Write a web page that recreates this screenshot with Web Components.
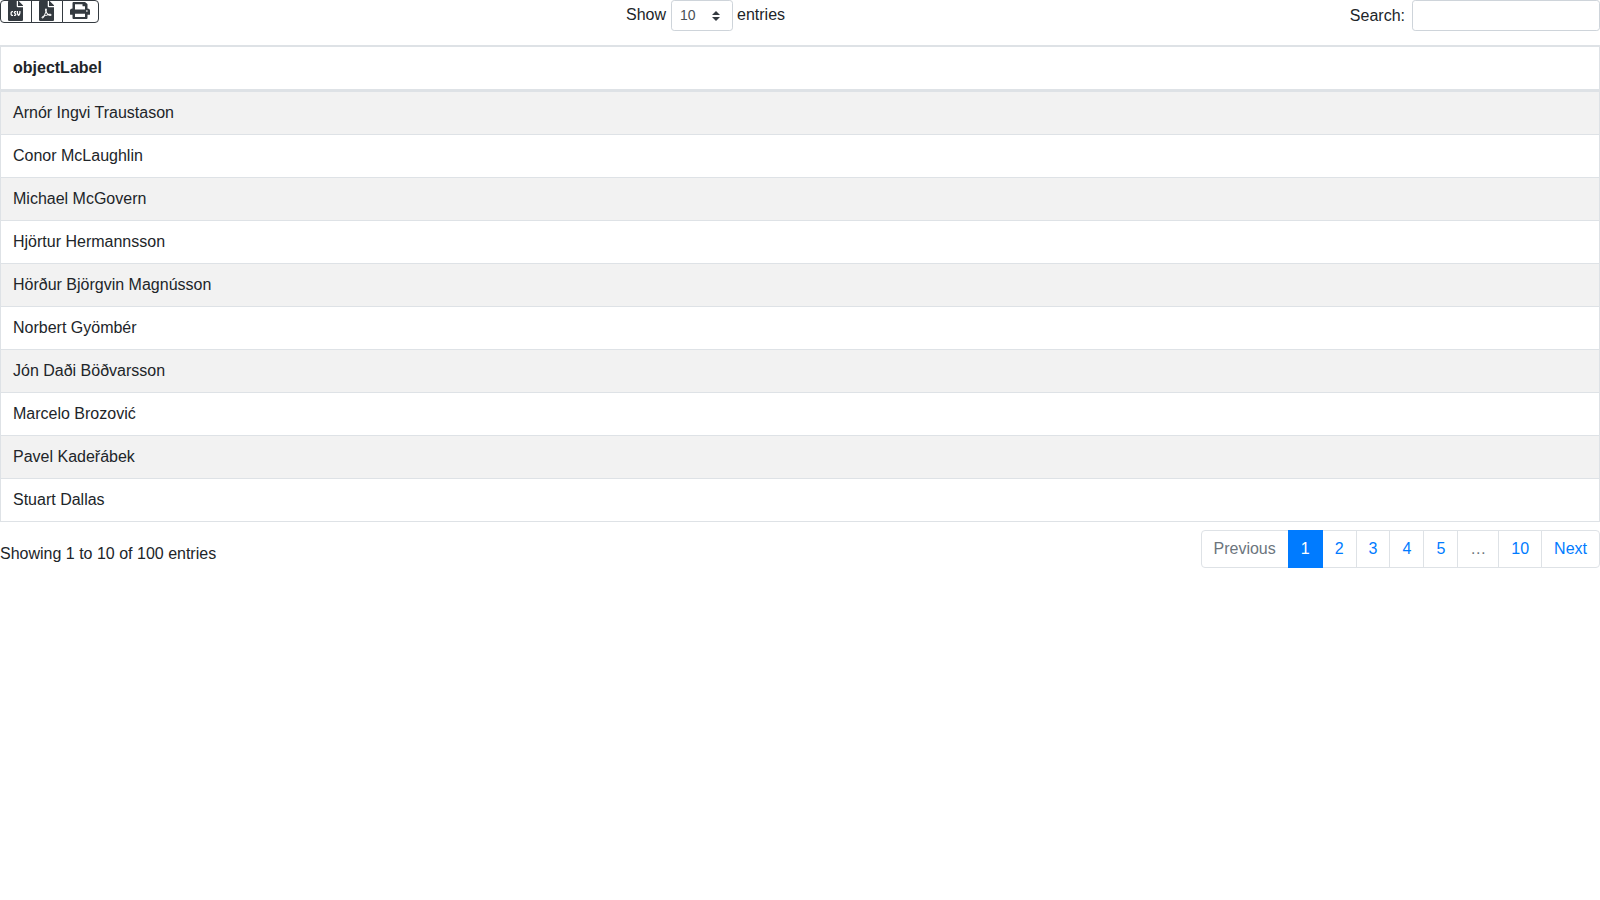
<!DOCTYPE html>
<html lang="en">
<head>
<meta charset="utf-8">
<title>objectLabel</title>
<style>
  html, body { margin: 0; }
  body { font: 16px/24px "Liberation Sans", Arial, sans-serif; color: #212529; }
</style>
</head>
<body>
<dt-toolbar>
  <dt-export slot="left"></dt-export>
  <dt-length slot="middle" value="10"></dt-length>
  <dt-search slot="right"></dt-search>
</dt-toolbar>
<dt-table heading="objectLabel">
  <dt-row>Arnór Ingvi Traustason</dt-row>
  <dt-row>Conor McLaughlin</dt-row>
  <dt-row>Michael McGovern</dt-row>
  <dt-row>Hjörtur Hermannsson</dt-row>
  <dt-row>Hörður Björgvin Magnússon</dt-row>
  <dt-row>Norbert Gyömbér</dt-row>
  <dt-row>Jón Daði Böðvarsson</dt-row>
  <dt-row>Marcelo Brozović</dt-row>
  <dt-row>Pavel Kadeřábek</dt-row>
  <dt-row>Stuart Dallas</dt-row>
</dt-table>
<dt-footer>
  <span slot="info">Showing 1 to 10 of 100 entries</span>
  <dt-pager slot="pager"></dt-pager>
</dt-footer>
<script>
const ICONS = {
  csv: ["0 0 384 512", "M224 136V0H24C10.7 0 0 10.7 0 24v464c0 13.3 10.7 24 24 24h336c13.3 0 24-10.7 24-24V160H248c-13.2 0-24-10.8-24-24zm-96 144c0 4.42-3.58 8-8 8h-8c-8.84 0-16 7.16-16 16v32c0 8.84 7.16 16 16 16h8c4.42 0 8 3.58 8 8v16c0 4.42-3.58 8-8 8h-8c-26.51 0-48-21.49-48-48v-32c0-26.51 21.49-48 48-48h8c4.42 0 8 3.58 8 8v16zm44.27 104H160c-4.42 0-8-3.58-8-8v-16c0-4.42 3.58-8 8-8h12.27c5.95 0 10.41-3.5 10.41-6.62 0-1.3-.75-2.66-2.12-3.84l-21.89-18.77c-8.47-7.22-13.33-17.48-13.33-28.14 0-21.3 19.02-38.62 42.41-38.62H200c4.42 0 8 3.58 8 8v16c0 4.42-3.58 8-8 8h-12.27c-5.95 0-10.41 3.5-10.41 6.62 0 1.3.75 2.66 2.12 3.84l21.89 18.77c8.47 7.22 13.33 17.48 13.33 28.14.01 21.29-19 38.62-42.39 38.62zM256 264v20.8c0 20.27 5.7 40.17 16 56.88 10.3-16.7 16-36.61 16-56.88V264c0-4.42 3.58-8 8-8h16c4.42 0 8 3.58 8 8v20.8c0 35.48-12.88 68.89-36.28 94.09-3.02 3.25-7.27 5.11-11.72 5.11s-8.7-1.86-11.72-5.11c-23.4-25.2-36.28-58.61-36.28-94.09V264c0-4.42 3.58-8 8-8h16c4.42 0 8 3.58 8 8zm121-159L279.1 7c-4.5-4.5-10.6-7-17-7H256v128h128v-6.1c0-6.3-2.5-12.4-7-16.9z"],
  pdf: ["0 0 384 512", "M181.9 256.1c-5-16-4.9-46.9-2-46.9 8.4 0 7.6 36.9 2 46.9zm-1.7 47.2c-7.7 20.2-17.3 43.3-28.4 62.7 18.3-7 39-17.2 62.9-21.9-12.7-9.6-24.9-23.4-34.5-40.8zM86.1 428.1c0 .8 13.2-5.4 34.9-40.2-6.7 6.3-29.1 24.5-34.9 40.2zM248 160h136v328c0 13.3-10.7 24-24 24H24c-13.3 0-24-10.7-24-24V24C0 10.7 10.7 0 24 0h200v136c0 13.2 10.8 24 24 24zm-8 171.8c-20-12.2-33.3-29-42.7-53.8 4.5-18.5 11.6-46.6 6.2-64.2-4.7-29.4-42.4-26.5-47.8-6.8-5 18.3-.4 44.1 8.1 77-11.6 27.6-28.7 64.6-40.8 85.8-.1 0-.1.1-.2.1-27.1 13.9-73.6 44.5-54.5 68 5.6 6.9 16 10 21.5 10 17.9 0 35.7-18 61.1-61.8 25.8-8.5 54.1-19.1 79-23.2 21.7 11.8 47.1 19.5 64 19.5 29.2 0 31.2-32 19.7-43.4-13.9-13.6-54.3-9.7-73.6-7.2zM377 105L279 7c-4.5-4.5-10.6-7-17-7h-6v128h128v-6.1c0-6.3-2.5-12.4-7-16.9zm-74.1 255.3c4.1-2.7-2.5-11.9-42.8-9 37.1 15.8 42.8 9 42.8 9z"],
  print: ["0 0 512 512", "M448 192V77.25c0-8.49-3.37-16.62-9.37-22.63L393.37 9.37c-6-6-14.14-9.37-22.63-9.37H96C78.33 0 64 14.33 64 32v160c-35.35 0-64 28.65-64 64v112c0 8.84 7.16 16 16 16h48v96c0 17.67 14.33 32 32 32h320c17.67 0 32-14.33 32-32v-96h48c8.84 0 16-7.16 16-16V256c0-35.35-28.65-64-64-64zm-64 256H128v-96h256v96zm0-224H128V64h192v48c0 8.84 7.16 16 16 16h48v96zm48 72c-13.25 0-24-10.75-24-24 0-13.26 10.75-24 24-24s24 10.74 24 24c0 13.25-10.75 24-24 24z"]
};

class DtToolbar extends HTMLElement {
  constructor() {
    super();
    this.attachShadow({mode: "open"}).innerHTML = `
      <style>
        :host { display: grid; grid-template-columns: 99px 1fr 288px; height: 45px; }
        .middle { display: flex; justify-content: center; }
        .right { display: flex; justify-content: flex-end; }
      </style>
      <div><slot name="left"></slot></div>
      <div class="middle"><slot name="middle"></slot></div>
      <div class="right"><slot name="right"></slot></div>`;
  }
}

class DtExport extends HTMLElement {
  constructor() {
    super();
    const btn = (k, w, size) => `<button style="width:${w}px" aria-label="${k}"><svg viewBox="${ICONS[k][0]}" ${size} preserveAspectRatio="none"><path fill="currentColor" d="${ICONS[k][1]}"/></svg></button>`;
    this.attachShadow({mode: "open"}).innerHTML = `
      <style>
        :host { display: flex; width: 99px; height: 23px; }
        button { display: flex; align-items: center; justify-content: center; flex: none; height: 23px; padding: 0; margin: 0 0 0 -1px;
          background: #fff; color: #343a40; border: 1px solid #343a40; overflow: hidden; }
        button:first-of-type { margin-left: 0; border-radius: 4px 0 0 4px; }
        button:last-of-type { border-radius: 0 4px 4px 0; }
        svg { display: block; flex: none; margin: -1px 1px 0 0; }
        button:last-of-type svg { margin-top: -2px; }
      </style>
      ${btn("csv", 32, 'width="15" height="20"')}${btn("pdf", 32, 'width="15" height="20"')}${btn("print", 37, 'width="20" height="17"')}`;
  }
}

class DtLength extends HTMLElement {
  constructor() {
    super();
    const v = this.getAttribute("value");
    this.attachShadow({mode: "open"}).innerHTML = `
      <style>
        :host { display: flex; height: 31px; align-items: flex-start; white-space: nowrap; line-height: 30px; }
        .select { box-sizing: border-box; width: 62px; height: 31px; margin: 0 4px 0 5px; padding: 0 8px; position: relative;
          border: 1px solid #ced4da; border-radius: 3.2px; font-size: 14px; line-height: 29px; color: #495057; background: #fff; }
        svg { position: absolute; right: 12px; top: 10px; }
      </style>
      Show
      <div class="select">${v}<svg width="8" height="10" viewBox="0 0 4 5"><path fill="#343a40" d="M2 0L0 2h4zm0 5L0 3h4z"/></svg></div>
      entries`;
  }
}

class DtSearch extends HTMLElement {
  constructor() {
    super();
    this.attachShadow({mode: "open"}).innerHTML = `
      <style>
        :host { display: flex; align-items: flex-start; line-height: 31px; }
        input { box-sizing: border-box; width: 188px; height: 31px; margin: 0 0 0 7px; padding: 4px 8px;
          border: 1px solid #ced4da; border-radius: 3.2px; background: #fff; }
      </style>
      Search:<input type="search" aria-label="Search">`;
  }
}

class DtTable extends HTMLElement {
  constructor() {
    super();
    this.attachShadow({mode: "open"}).innerHTML = `
      <style>
        :host { display: block; border-top: 2px solid #dee2e6; border-left: 1px solid #dee2e6; border-right: 1px solid #dee2e6; }
        .head { box-sizing: border-box; height: 45px; padding: 9px 12px; font-weight: 700; border-bottom: 3px solid #dee2e6; }
      </style>
      <div class="head">${this.getAttribute("heading")}</div>
      <slot></slot>`;
  }
}

class DtRow extends HTMLElement {
  constructor() {
    super();
    this.attachShadow({mode: "open"}).innerHTML = `
      <style>
        :host { display: block; box-sizing: border-box; height: 43px; padding: 9px 12px; border-bottom: 1px solid #dee2e6; }
        :host(:nth-child(odd)) { background: #f2f2f2; }
      </style>
      <slot></slot>`;
  }
}

class DtFooter extends HTMLElement {
  constructor() {
    super();
    this.attachShadow({mode: "open"}).innerHTML = `
      <style>
        :host { display: flex; justify-content: space-between; align-items: flex-start; margin-top: 8px; }
        .info { padding-top: 12px; }
      </style>
      <div class="info"><slot name="info"></slot></div>
      <slot name="pager"></slot>`;
  }
}

class DtPager extends HTMLElement {
  constructor() {
    super();
    const items = [["Previous", "off"], ["1", "on"], ["2"], ["3"], ["4"], ["5"], ["…", "off"], ["10"], ["Next"]];
    this.attachShadow({mode: "open"}).innerHTML = `
      <style>
        :host { display: flex; line-height: 20px; }
        a { display: block; padding: 8px 12px; margin-left: -1px; color: #007bff; background: #fff; border: 1px solid #dee2e6; text-decoration: none; }
        a:first-of-type { margin-left: 0; border-radius: 4px 0 0 4px; }
        a:last-of-type { border-radius: 0 4px 4px 0; }
        .off { color: #6c757d; }
        .on { color: #fff; background: #007bff; border-color: #007bff; position: relative; }
      </style>
      ${items.map(([t, c]) => `<a href="#" class="${c || ""}">${t}</a>`).join("")}`;
  }
}

customElements.define("dt-toolbar", DtToolbar);
customElements.define("dt-export", DtExport);
customElements.define("dt-length", DtLength);
customElements.define("dt-search", DtSearch);
customElements.define("dt-table", DtTable);
customElements.define("dt-row", DtRow);
customElements.define("dt-footer", DtFooter);
customElements.define("dt-pager", DtPager);
</script>
</body>
</html>
